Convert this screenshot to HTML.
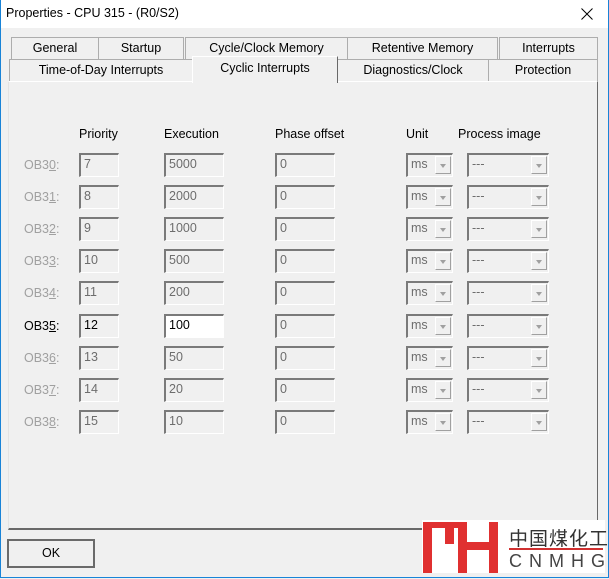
<!DOCTYPE html><html><head><style>
body{margin:0;width:609px;height:579px;background:#f0f0f0;font-family:"Liberation Sans","Noto Sans CJK SC",sans-serif;font-size:12px;position:relative;overflow:hidden}
.a{position:absolute}
.win{left:0;top:0;width:607px;height:577px;border:1px solid #1883d7;border-top:none}
.title{left:1px;top:0;width:607px;height:28px;background:#fff}
.tab{position:absolute;background:#f0f0f0;border:1px solid #adadad;border-bottom:none;text-align:center;font-size:12.5px;line-height:20px;box-sizing:border-box}
.panel{left:8px;top:81px;width:590px;height:449px;border:1px solid #fff;border-right-color:#696969;border-bottom:2px solid #696969;border-left:1px solid #e3e3e3;box-sizing:border-box}
.f{position:absolute;height:24px;box-sizing:border-box;border:1px solid #a0a0a0;border-top:2px solid #7a7a7a;border-left:2px solid #7a7a7a;border-right-color:#fff;border-bottom-color:#fff;color:#6d6d6d;font-size:12.5px;padding-left:3px;line-height:19px;background:#f0f0f0}
.dd{position:absolute;right:1px;top:1px;width:16px;height:18px;border:1px solid #fff;border-right-color:#a0a0a0;border-bottom-color:#a0a0a0;box-sizing:border-box}
.dd:after{content:"";position:absolute;left:4px;top:7px;border:3px solid transparent;border-top:4px solid #a0a0a0}
.lb{position:absolute;left:24px;color:#a0a0a0;font-size:12.5px}
.h{position:absolute;top:127px;font-size:12.5px}
</style></head><body>
<div class="a win"></div>
<div class="a title"></div>
<div class="a" style="left:6px;top:6px;font-size:12.5px">Properties - CPU 315 - (R0/S2)</div>
<svg class="a" style="left:581px;top:8px" width="12" height="12"><path d="M0.5 0.5L11.5 11.5M11.5 0.5L0.5 11.5" stroke="#000" stroke-width="1"/></svg>
<div class="tab" style="left:11px;top:37px;width:88px;height:22px">General</div>
<div class="tab" style="left:98px;top:37px;width:86px;height:22px">Startup</div>
<div class="tab" style="left:185px;top:37px;width:163px;height:22px">Cycle/Clock Memory</div>
<div class="tab" style="left:347px;top:37px;width:151px;height:22px">Retentive Memory</div>
<div class="tab" style="left:499px;top:37px;width:99px;height:22px">Interrupts</div>
<div class="a panel"></div>
<div class="tab" style="left:9px;top:59px;width:184px;height:22px">Time-of-Day Interrupts</div>
<div class="tab" style="left:337px;top:59px;width:152px;height:22px">Diagnostics/Clock</div>
<div class="tab" style="left:488px;top:59px;width:110px;height:22px">Protection</div>
<div class="tab" style="left:192px;top:56px;width:146px;height:27px;border-color:#fff #696969 transparent #fff;line-height:22px">Cyclic Interrupts</div>
<div class="h" style="left:79px">Priority</div><div class="h" style="left:164px">Execution</div><div class="h" style="left:275px">Phase offset</div><div class="h" style="left:406px">Unit</div><div class="h" style="left:458px">Process image</div>
<div id="rows"></div>
<script>
var d=[[7,5000],[8,2000],[9,1000],[10,500],[11,200],[12,100],[13,50],[14,20],[15,10]],h='';
d.forEach(function(r,i){var y=153+i*32.1,act=i==5;
h+='<div class="lb" style="top:'+(y+5)+'px;'+(act?'color:#000':'')+'">OB3<u>'+i+'</u>:</div>';
h+='<div class="f" style="left:79px;top:'+y+'px;width:40px;'+(act?'color:#000':'')+'">'+r[0]+'</div>';
h+='<div class="f" style="left:164px;top:'+y+'px;width:60px;'+(act?'color:#000;background:#fff':'')+'">'+r[1]+'</div>';
h+='<div class="f" style="left:275px;top:'+y+'px;width:60px">0</div>';
h+='<div class="f" style="left:406px;top:'+y+'px;width:47px">ms<div class="dd"></div></div>';
h+='<div class="f" style="left:467px;top:'+y+'px;width:82px">---<div class="dd"></div></div>';});
document.getElementById('rows').innerHTML=h;
</script>
<div class="a" style="left:7px;top:539px;width:88px;height:29px;box-sizing:border-box;border:2px solid #6a6a6a;text-align:center;line-height:25px;font-size:12.5px">OK</div>
<div class="a" style="left:422px;top:520px;width:183px;height:53px;background:#fff"></div>
<svg class="a" style="left:422px;top:520px" width="80" height="53"><g fill="#e03030"><rect x="1" y="2" width="9" height="51"/><rect x="1" y="2" width="44" height="6"/><rect x="23" y="2" width="9" height="22"/><rect x="36" y="2" width="9" height="51"/><rect x="36" y="22" width="40" height="8"/><rect x="67" y="2" width="9" height="51"/></g></svg>
<div class="a" style="left:509px;top:524px;font-size:19px;letter-spacing:1px;color:#333">中国煤化工</div>
<div class="a" style="left:509px;top:548px;width:94px;height:2px;background:#d03030"></div>
<div class="a" style="left:509px;top:551px;font-size:18px;letter-spacing:7px;color:#444">CNMHG</div>
</body></html>
